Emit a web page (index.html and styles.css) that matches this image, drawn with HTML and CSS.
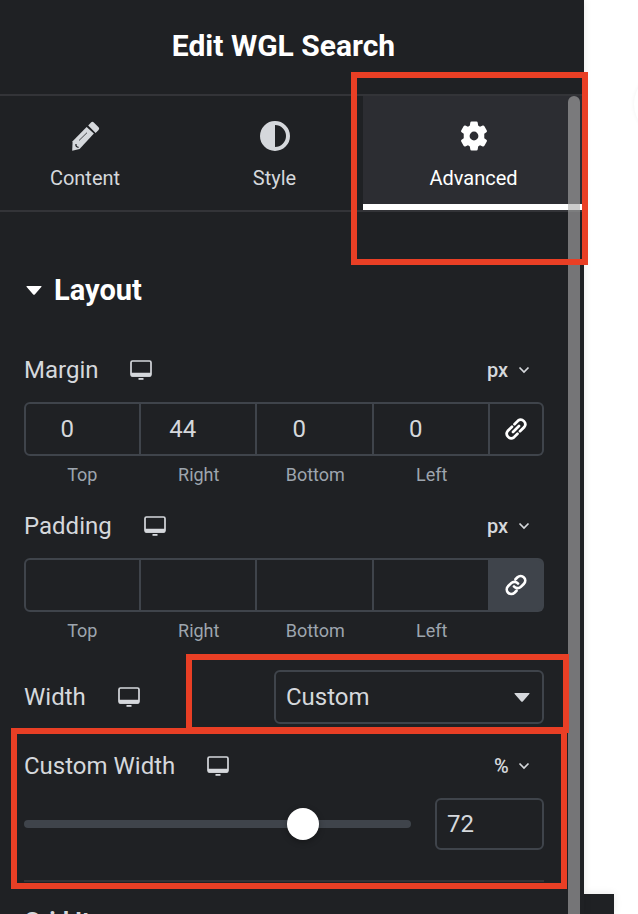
FILE: index.html
```html
<!DOCTYPE html>
<html lang="en">

<head>
	<meta charset="utf-8">
	<meta name="viewport" content="width=device-width, initial-scale=1.0">
	<title>Edit WGL Search</title>
	<link rel="stylesheet" href="styles.css">
</head>

<body>
	<!-- shared icons -->
	<svg class="sprite" aria-hidden="true">
		<symbol id="desktop" viewBox="0 0 22 20">
			<rect x="1" y="1" width="20" height="15" rx="1.5" fill="none" stroke="currentColor" stroke-width="1.7"/>
			<path d="M1 12.800h20v2.700q0 1.300-1.500 1.300h-17Q1 16.800 1 15.500z" fill="currentColor"/>
			<path d="M8.500 18h5v1.800h-5z" fill="currentColor"/>
		</symbol>
		<symbol id="chevron" viewBox="0 0 12 8">
			<path d="M1.500 1.500 6 6l4.500-4.500" fill="none" stroke="currentColor" stroke-width="1.700"/>
		</symbol>
		<symbol id="caret" viewBox="0 0 16 9">
			<path d="M1.200 0h13.600q1.400 0 .5 1L9 8.200q-1 1-2 0L.700 1Q-.2 0 1.200 0z" fill="currentColor"/>
		</symbol>
	</svg>

	<div class="editor">
		<div class="panel">
			<header class="panel-header">
				<h1>Edit WGL Search</h1>
			</header>

			<nav class="tabs">
				<button type="button" class="tab">
					<svg class="tab-icon" viewBox="0 0 32 32" aria-hidden="true">
						<path d="M3.200 30.700 3.600 21.200 17.600 7l7.300 6.600L10.600 29z" fill="currentColor"/>
						<path d="M19.200 5.500 22 2.500q1.400-1.400 2.800 0l4.800 4.800q1.200 1.300 0 2.600l-3 3z" fill="currentColor"/>
						<path d="M10 20.500 18 12.700" fill="none" stroke="#1f2124" stroke-width=".8"/>
						<path d="M7 24q-.5 3.200 2.600 3.300" fill="none" stroke="#1f2124" stroke-width="1.300"/>
					</svg>
					Content
				</button>
				<button type="button" class="tab">
					<svg class="tab-icon" viewBox="0 0 32 32" aria-hidden="true">
						<circle cx="16" cy="16" r="13" fill="none" stroke="currentColor" stroke-width="4"/>
						<path d="M16 2a14 14 0 0 0 0 28z" fill="currentColor"/>
					</svg>
					Style
				</button>
				<button type="button" class="tab tab-active">
					<svg class="tab-icon" viewBox="0 0 24 24" aria-hidden="true">
						<path fill="currentColor" d="M10.200 1.200h3.600q.9 0 1 .9l.3 2.100 1.400.8 2-.8q.8-.3 1.300.5l1.800 3.100q.4.800-.3 1.300l-1.600 1.300v3.200l1.600 1.300q.7.500.3 1.300l-1.800 3.100q-.5.800-1.300.5l-2-.8-1.400.8-.3 2.100q-.1.900-1 .9h-3.600q-.9 0-1-.9l-.3-2.100-1.400-.8-2 .8q-.8.300-1.300-.5l-1.800-3.100q-.4-.8.300-1.300l1.600-1.300v-3.200L2.700 9.100q-.7-.5-.3-1.300l1.800-3.100q.5-.8 1.300-.5l2 .8 1.400-.8.300-2.100q.1-.9 1-.9zM12 8.700a3.300 3.300 0 1 0 0 6.600 3.300 3.300 0 0 0 0-6.600z"/>
					</svg>
					Advanced
					<span class="mark mark-tab"></span>
				</button>
			</nav>

			<div class="controls">
				<h2 class="section-title">
					<svg class="caret" aria-hidden="true"><use href="#caret"/></svg>
					Layout
				</h2>

				<div class="control">
					<div class="control-head">
						<span class="label">Margin</span>
						<svg class="device" aria-hidden="true"><use href="#desktop"/></svg>
						<span class="unit">
							<select aria-label="Margin unit"><option>px</option></select>
							<svg class="chevron" aria-hidden="true"><use href="#chevron"/></svg>
						</span>
					</div>
					<div class="dimensions">
						<div class="side"><input type="text" id="margin-top" value="0"><label for="margin-top">Top</label></div>
						<div class="side"><input type="text" id="margin-right" value="44"><label for="margin-right">Right</label></div>
						<div class="side"><input type="text" id="margin-bottom" value="0"><label for="margin-bottom">Bottom</label></div>
						<div class="side"><input type="text" id="margin-left" value="0"><label for="margin-left">Left</label></div>
						<button type="button" class="link" aria-label="Link values">
							<svg viewBox="0 0 24 24" aria-hidden="true"><path d="M10.500 7.200 14 3.700a4.500 4.500 0 0 1 6.300 6.300L16 14.300M13.500 16.800 10 20.300A4.500 4.500 0 0 1 3.700 14L8 9.700M9 15l6-6"/></svg>
						</button>
					</div>
				</div>

				<div class="control">
					<div class="control-head">
						<span class="label">Padding</span>
						<svg class="device" aria-hidden="true"><use href="#desktop"/></svg>
						<span class="unit">
							<select aria-label="Padding unit"><option>px</option></select>
							<svg class="chevron" aria-hidden="true"><use href="#chevron"/></svg>
						</span>
					</div>
					<div class="dimensions">
						<div class="side"><input type="text" id="padding-top"><label for="padding-top">Top</label></div>
						<div class="side"><input type="text" id="padding-right"><label for="padding-right">Right</label></div>
						<div class="side"><input type="text" id="padding-bottom"><label for="padding-bottom">Bottom</label></div>
						<div class="side"><input type="text" id="padding-left"><label for="padding-left">Left</label></div>
						<button type="button" class="link link-on" aria-label="Unlink values">
							<svg viewBox="0 0 24 24" aria-hidden="true"><path d="M10 13.500a4.600 4.600 0 0 0 6.800.4l3.200-3.200a4.600 4.600 0 0 0-6.500-6.500l-2 2M14 10.500a4.600 4.600 0 0 0-6.800-.4L4 13.300a4.600 4.600 0 0 0 6.500 6.500l2-2"/></svg>
						</button>
					</div>
				</div>

				<div class="control control-inline">
					<label class="label" for="width">Width</label>
					<svg class="device" aria-hidden="true"><use href="#desktop"/></svg>
					<div class="select">
						<select id="width"><option>Custom</option></select>
						<svg class="caret" aria-hidden="true"><use href="#caret"/></svg>
						<span class="mark mark-select"></span>
					</div>
				</div>

				<div class="control control-marked">
					<div class="control-head">
						<label class="label" for="custom-width">Custom Width</label>
						<svg class="device" aria-hidden="true"><use href="#desktop"/></svg>
						<span class="unit">
							<select aria-label="Custom width unit"><option>%</option></select>
							<svg class="chevron" aria-hidden="true"><use href="#chevron"/></svg>
						</span>
					</div>
					<div class="slider-row">
						<div class="slider">
							<input type="range" aria-label="Custom width slider" min="0" max="100" value="72">
						</div>
						<input type="text" class="number" id="custom-width" value="72">
					</div>
					<span class="mark mark-slider"></span>
				</div>

				<div class="next">Grid Item</div>
			</div>

			<div class="scrollbar"></div>
		</div>

		<div class="preview">
			<div class="preview-page"><div class="bubble"></div></div>
			<div class="preview-foot"></div>
		</div>
	</div>
</body>

</html>
```
FILE: styles.css
```css
* {
	box-sizing: border-box;
}

body {
	margin: 0;
	background: #fff;
	color: #d5d8dc;
	font-family: Roboto, sans-serif;
	font-size: 24px;
	line-height: 28px;
}

button,
input,
select {
	margin: 0;
	padding: 0;
	border: none;
	border-radius: 0;
	background: none;
	color: inherit;
	font: inherit;
	-webkit-appearance: none;
	appearance: none;
}

.sprite {
	display: none;
}

.editor {
	display: flex;
	height: 100vh;
	overflow: hidden;
}

.panel {
	position: relative;
	z-index: 1;
	flex: 1;
	min-width: 0;
	background: #1f2124;
	box-shadow: 0 0 8px rgba(0, 0, 0, 0.1);
}

.panel-header {
	padding: 30px 17px 32px 0;
}

.panel-header h1 {
	margin: 0;
	color: #fff;
	font-size: 30px;
	line-height: 32px;
	text-align: center;
}

/* Tabs */

.tabs {
	display: grid;
	grid-template-columns: 186fr 177fr 221fr;
	border-top: 2px solid #333438;
	border-bottom: 2px solid #333438;
}

.tab {
	position: relative;
	display: flex;
	flex-direction: column;
	align-items: center;
	gap: 14px;
	height: 114px;
	padding-top: 24px;
	border-bottom: 6px solid transparent;
	font-size: 20px;
	line-height: 24px;
}

.tab:first-child {
	padding-right: 16px;
}

.tab-active {
	background: #2c2d32;
	border-bottom-color: #fff;
	color: #fff;
}

.tab-icon {
	width: 32px;
	height: 32px;
}

/* Controls */

.controls {
	padding: 62px 40px 0 24px;
}

.section-title {
	display: flex;
	align-items: center;
	gap: 12px;
	margin: 0 0 50px;
	padding-left: 2px;
	color: #fff;
	font-size: 29px;
	line-height: 32px;
}

.caret {
	width: 16px;
	height: 9px;
}

.control {
	margin-bottom: 25px;
}

.control-head {
	display: flex;
	align-items: center;
	margin-bottom: 18px;
}

.device {
	width: 22px;
	height: 20px;
	margin-left: 32px;
}

.unit {
	display: flex;
	align-items: center;
	gap: 9px;
	margin-left: auto;
	padding-right: 14px;
	font-size: 20px;
	font-weight: 500;
}

.chevron {
	width: 12px;
	height: 8px;
}

.dimensions {
	display: flex;
	align-items: flex-start;
}

.side {
	flex: 1;
	min-width: 0;
	color: #9da5ae;
	font-size: 18px;
	line-height: 24px;
	text-align: center;
}

.side input {
	display: block;
	width: 100%;
	height: 54px;
	margin-bottom: 7px;
	padding-right: 30px;
	border: 2px solid #3f444b;
	border-left: none;
	color: #d5d8dc;
	font-size: 24px;
	text-align: center;
}

.side:first-child input {
	border-left: 2px solid #3f444b;
	border-radius: 6px 0 0 6px;
}

.link {
	display: flex;
	align-items: center;
	justify-content: center;
	width: 54px;
	height: 54px;
	border: 2px solid #3f444b;
	border-left: none;
	border-radius: 0 6px 6px 0;
	color: #fff;
}

.link svg {
	width: 24px;
	height: 24px;
	fill: none;
	stroke: currentColor;
	stroke-width: 2.7;
	stroke-linecap: round;
}

.link-on {
	background: #3f444b;
}

.control-inline {
	display: flex;
	align-items: center;
	margin: 27px 0 28px;
}

.select {
	position: relative;
	display: flex;
	align-items: center;
	width: 270px;
	height: 54px;
	margin-left: auto;
	padding: 0 12px 0 10px;
	border: 2px solid #3f444b;
	border-radius: 6px;
}

.select select {
	flex: 1;
}

.control-marked {
	position: relative;
	margin-bottom: 30px;
}

.slider-row {
	display: flex;
	align-items: center;
	gap: 24px;
}

.slider {
	display: grid;
	flex: 1;
	align-items: center;
}

.slider::before {
	content: "";
	grid-area: 1 / 1;
	height: 8px;
	border-radius: 4px;
	background: #3f444b;
}

/* wider than the track, so the thumb's centre reaches both ends */
.slider input {
	grid-area: 1 / 1;
	width: calc(100% + 32px);
	height: 32px;
	margin: 0 -16px;
}

.slider input::-webkit-slider-thumb {
	-webkit-appearance: none;
	width: 32px;
	height: 32px;
	border-radius: 50%;
	background: #fff;
	box-shadow: 0 2px 6px rgba(0, 0, 0, 0.3);
}

.number {
	width: 109px;
	height: 52px;
	padding: 0 10px;
	border: 2px solid #3f444b;
	border-radius: 6px;
}

.next {
	padding-top: 25px;
	border-top: 2px solid #333438;
	font-weight: 700;
}

.scrollbar {
	position: absolute;
	top: 96px;
	right: 4px;
	bottom: 0;
	width: 12px;
	border-radius: 6px 6px 0 0;
	background: rgba(172, 172, 172, 0.61);
}

/* Red highlight frames */

.mark {
	position: absolute;
	z-index: 2;
	border: 6px solid #e93f25;
	pointer-events: none;
}

.mark-tab {
	top: -24px;
	right: -4px;
	left: -12px;
	height: 193px;
}

.mark-select {
	top: -18px;
	right: -27px;
	bottom: -11px;
	left: -90px;
}

.mark-slider {
	top: -24px;
	right: -23px;
	bottom: -39px;
	left: -13px;
}

/* Page preview */

.preview {
	display: flex;
	flex-direction: column;
	width: 54px;
}

.preview-page {
	position: relative;
	flex: 1;
	overflow: hidden;
}

.bubble {
	position: absolute;
	top: 72px;
	left: 50px;
	width: 64px;
	height: 64px;
	border-radius: 50%;
	box-shadow: 0 0 4px rgba(0, 0, 0, 0.06);
}

.preview-foot {
	width: 30px;
	height: 20px;
	background: #1f2124;
	box-shadow: 0 0 8px rgba(0, 0, 0, 0.1);
}
```
